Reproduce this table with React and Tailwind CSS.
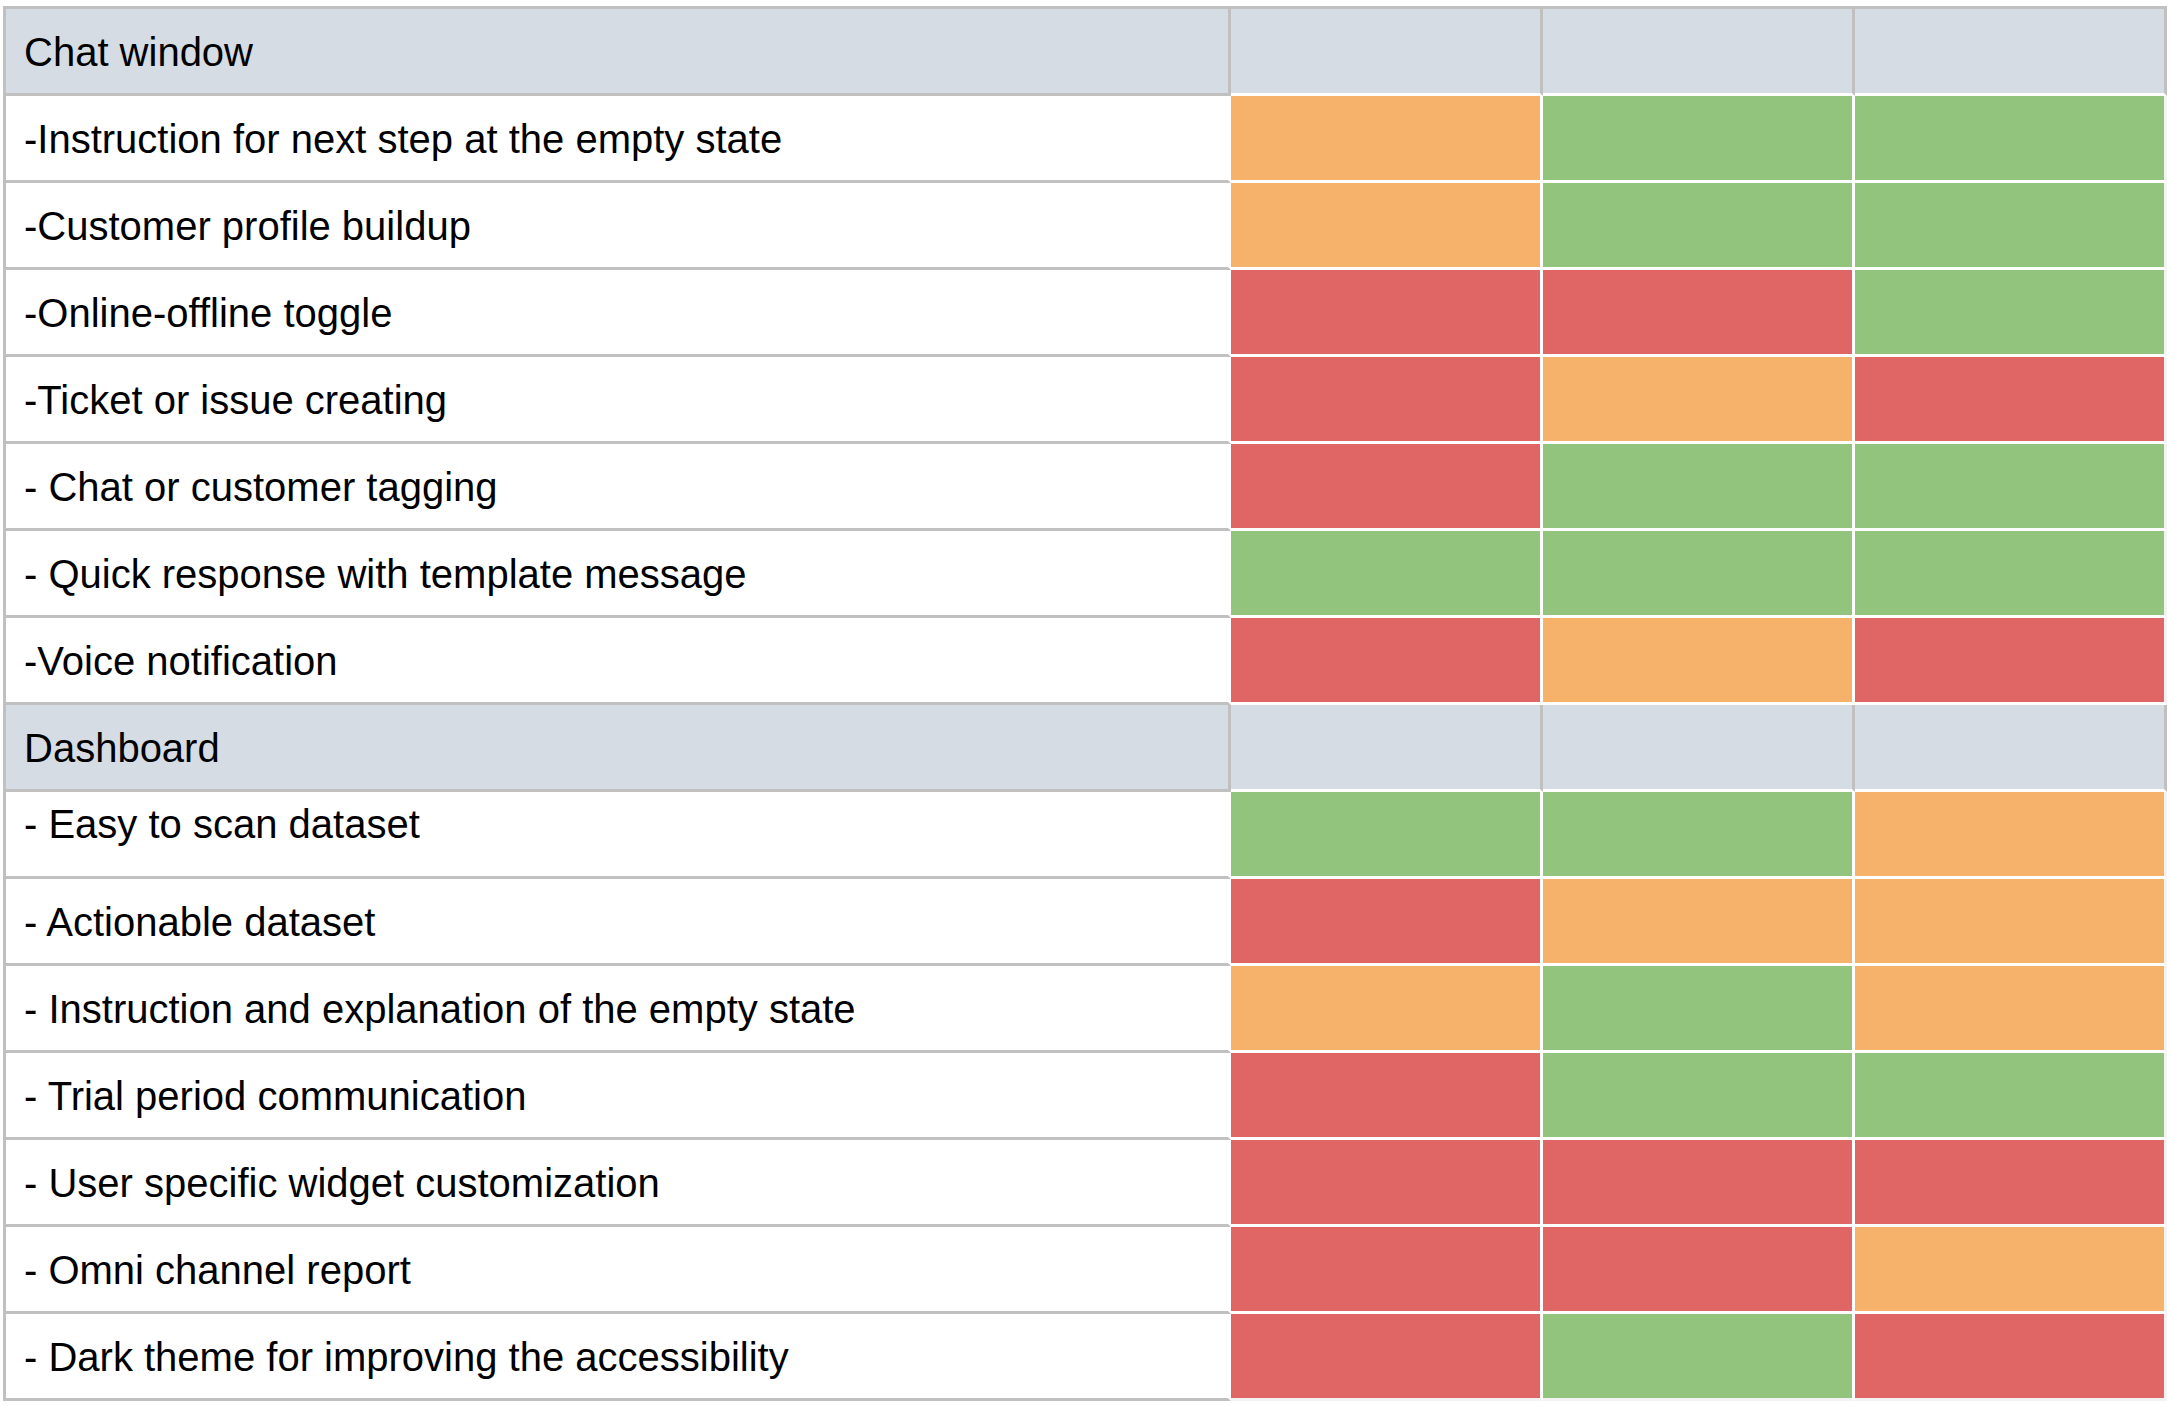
const COLORS = {
    O: "bg-[#f6b26b]",
    G: "bg-[#93c47d]",
    R: "bg-[#e06666]"
};

const sections = [

    {
        title: "Chat window",
        rows: [
            { label: "-Instruction for next step at the empty state", marks: ["O", "G", "G"] },
            { label: "-Customer profile buildup", marks: ["O", "G", "G"] },
            { label: "-Online-offline toggle", marks: ["R", "R", "G"] },
            { label: "-Ticket or issue creating", marks: ["R", "O", "R"] },
            { label: "- Chat or customer tagging", marks: ["R", "G", "G"] },
            { label: "- Quick response with template message", marks: ["G", "G", "G"] },
            { label: "-Voice notification", marks: ["R", "O", "R"] }
        ]
    },

    {
        title: "Dashboard",
        rows: [
            { label: "- Easy to scan dataset", marks: ["G", "G", "O"], top: true },
            { label: "- Actionable dataset", marks: ["R", "O", "O"] },
            { label: "- Instruction and explanation of the empty state", marks: ["O", "G", "O"] },
            { label: "- Trial period communication", marks: ["R", "G", "G"] },
            { label: "- User specific widget customization", marks: ["R", "R", "R"] },
            { label: "- Omni channel report", marks: ["R", "R", "O"] },
            { label: "- Dark theme for improving the accessibility", marks: ["R", "G", "R"] }
        ]
    }

];

function SectionHeader({ title }) {

    return (

        <div className="grid grid-cols-[1225px_312px_312px_312px] h-[87px]">

            <div className="flex items-center pl-[18px] pt-[2px] bg-[#d5dce4] border-r-[3px] border-b-[3px] border-[#c0c0c0]">

                {title}

            </div>

            <div className="bg-[#d5dce4] border-r-[3px] border-b-[3px] border-r-[#c0c0c0] border-b-white" />

            <div className="bg-[#d5dce4] border-r-[3px] border-b-[3px] border-r-[#c0c0c0] border-b-white" />

            <div className="bg-[#d5dce4] border-r-[3px] border-b-[3px] border-r-[#c0c0c0] border-b-white" />

        </div>

    );

}

function FeatureRow({ row, last }) {

    return (

        <div className="grid grid-cols-[1225px_312px_312px_312px] h-[87px]">

            <div
                className={
                    row.top
                        ? "flex items-start pt-[12px] pl-[18px] bg-white border-r-[3px] border-b-[3px] border-r-white border-b-[#c0c0c0]"
                        : "flex items-center pl-[18px] pt-[2px] bg-white border-r-[3px] border-b-[3px] border-r-white border-b-[#c0c0c0]"
                }
            >

                {row.label}

            </div>

            {

                row.marks.map((mark, i) => (

                    <div
                        key={i}
                        className={[
                            COLORS[mark],
                            "border-r-[3px] border-b-[3px]",
                            i === 2 ? "border-r-[#f3f3f3]" : "border-r-white",
                            last ? "border-b-[#f3f3f3]" : "border-b-white"
                        ].join(" ")}
                    />

                ))

            }

        </div>

    );

}

export default function App() {

    return (

        <div className="min-h-screen bg-white pt-[6px] pl-[3px]">

            <div
                className="w-[2164px] border-l-[3px] border-t-[3px] border-[#c0c0c0] text-[40px] text-black leading-none"
                style={{ fontFamily: '"Liberation Sans", Arial, sans-serif' }}
            >

                {

                    sections.map((section, s) => (

                        <div key={section.title}>

                            <SectionHeader title={section.title} />

                            {

                                section.rows.map((row, r) => (

                                    <FeatureRow
                                        key={row.label}
                                        row={row}
                                        last={s === sections.length - 1 && r === section.rows.length - 1}
                                    />

                                ))

                            }

                        </div>

                    ))

                }

            </div>

        </div>

    );

}
